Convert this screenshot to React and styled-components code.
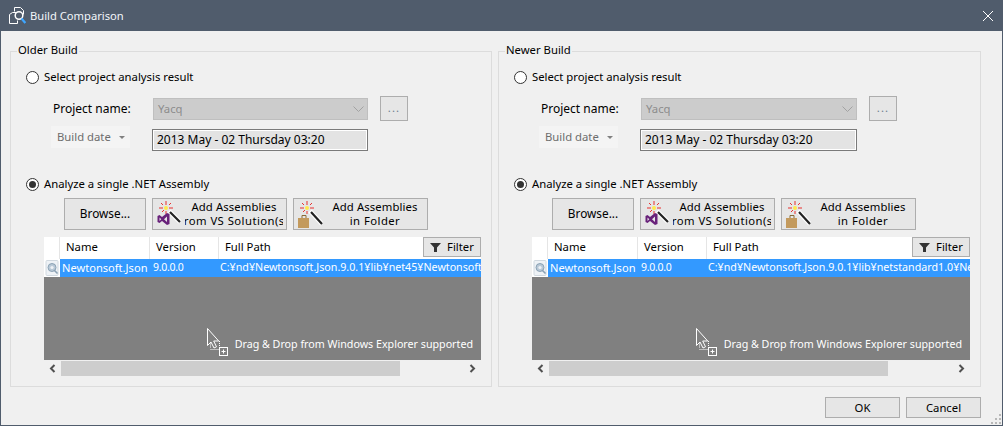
import styled, { createGlobalStyle } from 'styled-components';

const GlobalStyle = createGlobalStyle`
  html, body {
    margin: 0;
    padding: 0;
    overflow: hidden;
  }
  body {
    font-family: "Noto Sans", "Open Sans", sans-serif;
    font-size: 11.3px;
    color: #000;
  }
`;

function TitleIcon() {
  return (
    <svg width="17" height="18" viewBox="0 0 17 18">
      <path d="M5.5 4.5v-4h6l3 3v4" fill="none" stroke="#fff" />
      <path d="M3.5 5.5h4M0.5 7.5v9h8v-3" fill="none" stroke="#fff" />
      <path d="M0.5 7.5l3-2" fill="none" stroke="#fff" />
      <circle cx="10" cy="8.5" r="3.8" fill="#505c6c" stroke="#fff" strokeWidth="1.5" />
      <path d="M12.5 11.5l3.8 4.5" stroke="#3ea6ff" strokeWidth="2.2" />
    </svg>
  );
}

function CloseIcon() {
  return (
    <svg width="10" height="10" viewBox="0 0 10 10">
      <path d="M0 0l10 10M10 0L0 10" stroke="#fff" strokeWidth="1" />
    </svg>
  );
}

function Wand({ cx, cy, ex, ey }) {
  return (
    <>
      <path
        d={`M${cx - 7} ${cy}h4M${cx + 3} ${cy}h4M${cx} ${cy - 7}v4M${cx} ${cy + 3}v3M${cx - 5} ${cy - 5}l2 2M${cx + 5} ${cy - 5}l-2 2M${cx - 4} ${cy + 4}l2-2`}
        stroke="#e8312f"
      />
      <circle cx={cx} cy={cy} r="2" fill="#ffe94d" />
      <path d={`M${cx + 3} ${cy + 3}L${ex} ${ey}`} stroke="#fff" strokeWidth="4.5" />
      <path d={`M${cx + 4} ${cy + 4}L${ex} ${ey}`} stroke="#222" strokeWidth="2.2" />
    </>
  );
}

function VsWandIcon() {
  return (
    <svg width="25" height="28" viewBox="0 0 25 28">
      <Wand cx={9} cy={8} ex={23} ey={22} />
      <path
        transform="translate(0 -1)"
        d="M0.5 17l2-1 2.5 2 5-4 2.5 1v10l-2.5 1-5-4-2.5 2-2-1zM2.5 18.5v3.5l1.8-1.8zM10 17.5l-3 2.7 3 2.7z"
        fill="#68217a"
        fillRule="evenodd"
      />
    </svg>
  );
}

function FolderWandIcon() {
  return (
    <svg width="25" height="28" viewBox="0 0 25 28">
      <Wand cx={9} cy={8} ex={24} ey={24} />
      <path d="M4 18v-2.5h4V18" fill="none" stroke="#8a6a36" />
      <rect x="0" y="18" width="11" height="10" fill="#c39a5d" />
    </svg>
  );
}

function AssemblyIcon() {
  return (
    <svg width="15" height="16" viewBox="0 0 15 16">
      <rect x="1" y="0.5" width="12" height="15" rx="1" fill="#eef2f6" stroke="#d0d8df" />
      <circle cx="7" cy="7.5" r="4" fill="#b9c9d7" stroke="#8ba2b5" />
      <circle cx="7" cy="7.5" r="1.6" fill="#eef2f6" />
      <path d="M9 10l3.5 3.5" stroke="#8ba2b5" strokeWidth="1.6" />
    </svg>
  );
}

function DragIcon() {
  return (
    <svg width="22" height="29" viewBox="0 0 22 29">
      <path d="M0.5 0.5v17l3.5-3.5 3 6 2.5-1.2-2.8-5.8h5z" fill="none" stroke="#fff" />
      <path d="M3.5 19.5v-5M3.5 21.5h9M12.5 13v7" stroke="#fff" strokeDasharray="1 1" fill="none" />
      <rect x="12.5" y="19.5" width="8" height="8" fill="none" stroke="#fff" />
      <path d="M16.5 21.5v4M14.5 23.5h4" stroke="#fff" />
    </svg>
  );
}

function FilterIcon() {
  return (
    <svg width="11" height="11" viewBox="0 0 11 11">
      <path d="M0 1h11L7 5.5V10L4 10V5.5z" fill="#333" />
    </svg>
  );
}

function Chevron({ direction }) {
  return (
    <svg width="7" height="9" viewBox="0 0 7 9">
      <path
        d={direction === 'left' ? 'M5.5 1L2 4.5 5.5 8' : 'M1.5 1L5 4.5 1.5 8'}
        fill="none"
        stroke="#505050"
        strokeWidth="2"
      />
    </svg>
  );
}

function GripIcon() {
  return (
    <svg width="10" height="10" viewBox="0 0 10 10">
      <path
        d="M8 0h2v2H8zM4 4h2v2H4zM8 4h2v2H8zM0 8h2v2H0zM4 8h2v2H4zM8 8h2v2H8z"
        fill="#b8b8b8"
      />
    </svg>
  );
}

function BuildPanel({ title, path }) {
  return (
    <Group>
      <Legend>{title}</Legend>
      <RadioRow $first>
        <Radio />
        <RadioLabel>Select project analysis result</RadioLabel>
      </RadioRow>
      <ProjectRow>
        <FieldLabel>Project name:</FieldLabel>
        <DisabledSelect>
          <span>Yacq</span>
          <svg width="11" height="6" viewBox="0 0 11 6">
            <path d="M0.5 0.5l5 5 5-5" fill="none" stroke="#a2a2a2" />
          </svg>
        </DisabledSelect>
        <MoreButton>...</MoreButton>
      </ProjectRow>
      <DateRow>
        <DateKind>
          Build date
          <Caret />
        </DateKind>
        <DateValue>2013 May - 02 Thursday 03:20</DateValue>
      </DateRow>
      <RadioRow>
        <Radio $checked />
        <RadioLabel>Analyze a single .NET Assembly</RadioLabel>
      </RadioRow>
      <ButtonRow>
        <BrowseButton>Browse...</BrowseButton>
        <AddButton>
          <VsWandIcon />
          <AddLabel>
            <span>Add Assemblies</span>
            <span>from VS Solution(s)</span>
          </AddLabel>
        </AddButton>
        <AddButton>
          <FolderWandIcon />
          <AddLabel>
            <span>Add Assemblies</span>
            <span>in Folder</span>
          </AddLabel>
        </AddButton>
      </ButtonRow>
      <Table>
        <HeaderRow>
          <HeaderCell />
          <HeaderCell>Name</HeaderCell>
          <HeaderCell>Version</HeaderCell>
          <LastHeaderCell>
            <span>Full Path</span>
            <FilterButton>
              <FilterIcon />
              Filter
            </FilterButton>
          </LastHeaderCell>
        </HeaderRow>
        <SelectedRow>
          <IconCell>
            <AssemblyIcon />
          </IconCell>
          <Cell>Newtonsoft.Json</Cell>
          <VersionCell>9.0.0.0</VersionCell>
          <PathCell>{path}</PathCell>
        </SelectedRow>
        <EmptyArea>
          <DragIcon />
          <DragHint>Drag &amp; Drop from Windows Explorer supported</DragHint>
        </EmptyArea>
        <ScrollBar>
          <ScrollArrow>
            <Chevron direction="left" />
          </ScrollArrow>
          <ScrollTrack>
            <ScrollThumb />
          </ScrollTrack>
          <ScrollArrow>
            <Chevron direction="right" />
          </ScrollArrow>
        </ScrollBar>
      </Table>
    </Group>
  );
}

export default function App() {
  return (
    <Window>
      <GlobalStyle />
      <TitleBar>
        <TitleIcon />
        <TitleText>Build Comparison</TitleText>
        <CloseIcon />
      </TitleBar>
      <Body>
        <Panels>
          <BuildPanel
            title="Older Build"
            path="C:¥nd¥Newtonsoft.Json.9.0.1¥lib¥net45¥Newtonsoft.Json.dll"
          />
          <BuildPanel
            title="Newer Build"
            path="C:¥nd¥Newtonsoft.Json.9.0.1¥lib¥netstandard1.0¥Newtonsoft.Json.dll"
          />
        </Panels>
        <Footer>
          <FooterButton>OK</FooterButton>
          <FooterButton>Cancel</FooterButton>
          <Grip>
            <GripIcon />
          </Grip>
        </Footer>
      </Body>
    </Window>
  );
}

const Window = styled.div`
  display: flex;
  flex-direction: column;
  box-sizing: border-box;
  width: 1003px;
  height: 426px;
  border: 1px solid #505c6c;
  border-top: 0;
  background: #f0f0f0;
`;

const TitleBar = styled.div`
  display: flex;
  align-items: center;
  flex: none;
  height: 31px;
  margin: 0 -1px;
  padding: 0 10px 0 9px;
  background: #505c6c;
`;

const TitleText = styled.div`
  flex: 1;
  margin-left: 4px;
  font-size: 11.2px;
  color: #f2f6fa;
`;

const Body = styled.div`
  position: relative;
  display: flex;
  flex-direction: column;
  flex: 1;
  padding: 13px 0 0 9px;
`;

const Panels = styled.div`
  display: grid;
  grid-template-columns: 482px 483px;
  column-gap: 6px;
`;

const Group = styled.fieldset`
  display: flex;
  flex-direction: column;
  box-sizing: border-box;
  min-width: 0;
  height: 343px;
  margin: 0;
  padding: 0;
  border: 1px solid #dcdcdc;
`;

const Legend = styled.legend`
  height: 14px;
  margin-left: 6px;
  padding: 0 1px;
  line-height: 12px;
`;

const RadioRow = styled.div`
  display: flex;
  align-items: center;
  gap: 5px;
  height: 14px;
  margin-top: ${({ $first }) => ($first ? '12px' : '26px')};
  padding-left: 15px;
`;

const RadioLabel = styled.span`
  padding-bottom: 2px;
`;

const Radio = styled.span`
  position: relative;
  box-sizing: border-box;
  flex: none;
  width: 13px;
  height: 13px;
  border: 1px solid #333;
  border-radius: 50%;
  background: #fff;

  &::after {
    content: '';
    display: ${({ $checked }) => ($checked ? 'block' : 'none')};
    position: absolute;
    inset: 2px;
    border-radius: 50%;
    background: #333;
  }
`;

const ProjectRow = styled.div`
  display: flex;
  align-items: center;
  height: 25px;
  margin-top: 12px;
  padding: 0 83px 0 42px;
`;

const FieldLabel = styled.span`
  flex: none;
  width: 100px;
  font-size: 12px;
`;

const DisabledSelect = styled.div`
  display: flex;
  align-items: center;
  justify-content: space-between;
  box-sizing: border-box;
  flex: 1;
  height: 22px;
  padding: 0 3px 0 4px;
  border: 1px solid #bfbfbf;
  background: #ccc;
  color: #8d8d8d;
`;

const BaseButton = styled.div`
  display: flex;
  align-items: center;
  justify-content: center;
  box-sizing: border-box;
  flex: none;
  border: 1px solid #adadad;
  background: #e6e6e6;
`;

const MoreButton = styled(BaseButton)`
  width: 28px;
  height: 25px;
  margin-left: 12px;
  padding-bottom: 2px;
  letter-spacing: 1.2px;
  color: #6f7f90;
`;

const DateRow = styled.div`
  display: flex;
  align-items: flex-start;
  gap: 22px;
  height: 25px;
  margin-top: 5px;
  padding: 0 123px 0 40px;
`;

const DateKind = styled.div`
  display: flex;
  align-items: center;
  justify-content: space-between;
  box-sizing: border-box;
  flex: none;
  width: 79px;
  height: 22px;
  padding: 0 5px 2px 6px;
  background: #f4f4f4;
  color: #6d6d6d;
`;

const Caret = styled.span`
  width: 0;
  height: 0;
  margin-top: 2px;
  border-top: 3px solid #808080;
  border-left: 3px solid transparent;
  border-right: 3px solid transparent;
`;

const DateValue = styled.div`
  display: flex;
  align-items: center;
  box-sizing: border-box;
  flex: 1;
  height: 22px;
  margin-top: 3px;
  padding: 0 0 2px 4px;
  border: 1px solid #7a7a7a;
  box-shadow: inset 0 0 0 1px #fff;
  background: #e3e3e3;
  font-size: 12px;
`;

const ButtonRow = styled.div`
  display: flex;
  gap: 6px;
  margin-top: 7px;
  padding-left: 53px;
`;

const BrowseButton = styled(BaseButton)`
  width: 82px;
  height: 32px;
  padding-bottom: 2px;
  font-size: 11.8px;
`;

const AddButton = styled(BaseButton)`
  justify-content: flex-start;
  width: 135px;
  height: 32px;
  padding: 0 3px 0 4px;
  gap: 3px;
`;

const AddLabel = styled.div`
  display: flex;
  flex-direction: column;
  align-items: center;
  flex: 1;
  min-width: 0;
  overflow: hidden;
  white-space: nowrap;
  line-height: 14px;

  span {
    flex: none;
    letter-spacing: 0.1px;
  }

  span:nth-child(2) {
    letter-spacing: 0.45px;
  }
`;

const Table = styled.div`
  display: flex;
  flex-direction: column;
  margin: 7px 10px 0 33px;
`;

const columns = '16px 90px 69px minmax(0, 1fr)';

const HeaderRow = styled.div`
  display: grid;
  grid-template-columns: ${columns};
  height: 22px;
  background: #fff;
`;

const HeaderCell = styled.div`
  display: flex;
  align-items: flex-start;
  box-sizing: border-box;
  height: 100%;
  padding-left: 6px;
  border-right: 1px solid #e5e5e5;
  line-height: 20px;
`;

const LastHeaderCell = styled(HeaderCell)`
  justify-content: space-between;
  border-right: 0;
`;

const FilterButton = styled(BaseButton)`
  gap: 6px;
  width: 58px;
  height: 20px;
`;

const SelectedRow = styled.div`
  display: grid;
  grid-template-columns: ${columns};
  height: 18px;
  background: #3399ff;
  color: #fff;
`;

const Cell = styled.div`
  display: flex;
  align-items: center;
  padding: 0 0 2px 2px;
  overflow: hidden;
  white-space: nowrap;
  font-size: 11.1px;
`;

const VersionCell = styled(Cell)`
  padding-left: 3px;
  font-size: 10.5px;
  letter-spacing: -0.3px;
`;

const PathCell = styled(Cell)`
  padding-left: 1px;
  font-size: 10.7px;
`;

const IconCell = styled.div`
  display: flex;
  align-items: center;
  padding-left: 1px;
  background: #fff;
`;

const EmptyArea = styled.div`
  display: flex;
  align-items: flex-end;
  justify-content: flex-end;
  gap: 6px;
  box-sizing: border-box;
  height: 83px;
  padding: 0 8px 3px 0;
  background: #808080;
`;

const DragHint = styled.span`
  margin-bottom: 6px;
  font-size: 10.7px;
  color: #fff;
`;

const ScrollBar = styled.div`
  display: flex;
  align-items: stretch;
  height: 15px;
  margin-top: 1px;
`;

const ScrollArrow = styled.div`
  display: flex;
  align-items: center;
  justify-content: center;
  flex: none;
  width: 17px;
`;

const ScrollTrack = styled.div`
  flex: 1;
`;

const ScrollThumb = styled.div`
  width: 339px;
  height: 100%;
  background: #cdcdcd;
`;

const Footer = styled.div`
  display: flex;
  gap: 6px;
  padding: 10px 0 0 815px;
`;

const FooterButton = styled(BaseButton)`
  width: 75px;
  height: 21px;
`;

const Grip = styled.div`
  position: absolute;
  right: 1px;
  bottom: 1px;
  line-height: 0;
`;
